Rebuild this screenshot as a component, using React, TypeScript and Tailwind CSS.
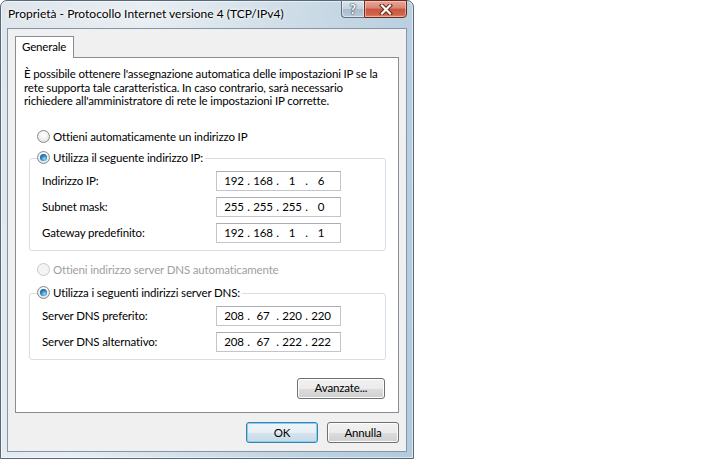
import React, { Fragment } from "react";

function Radio({ checked = false, disabled = false }: { checked?: boolean; disabled?: boolean }) {
  return (
    <span
      className={
        "w-[13px] h-[13px] rounded-full border flex items-center justify-center shrink-0 " +
        (disabled
          ? "border-[#c9c9c9] bg-[#f4f4f4]"
          : "border-[#8a8a8a] bg-[radial-gradient(circle_at_50%_35%,#ffffff_0%,#f0f0f0_50%,#d4d4d4_100%)]")
      }
    >
      {checked && (
        <span className="w-[7px] h-[7px] rounded-full bg-[radial-gradient(circle_at_62%_68%,#8fe2ff_0%,#2f86c4_45%,#0d3f6f_100%)]" />
      )}
    </span>
  );
}

function IpBox({ parts }: { parts: string[] }) {
  return (
    <div className="w-[125px] h-[20px] border border-[#c2c6cc] border-t-[#abadb3] bg-white flex items-center pl-[4px] text-black">
      {parts.map((p, i) => (
        <Fragment key={i}>
          {i > 0 && <span className="w-[3px] text-center">.</span>}
          <span className="w-[26px] text-center">{p}</span>
        </Fragment>
      ))}
    </div>
  );
}

function Row({ label, parts }: { label: string; parts: string[] }) {
  return (
    <div className="flex items-center h-[20px]">
      <span className="w-[186px] pl-[12px]">{label}</span>
      <IpBox parts={parts} />
    </div>
  );
}

function Btn({ children, def = false, w }: { children: React.ReactNode; def?: boolean; w: string }) {
  return (
    <div
      className={
        "h-[21px] rounded-[3px] border flex items-center justify-center text-[11.5px] leading-[14px] tracking-[-0.15px] text-black " +
        w +
        " " +
        (def
          ? "border-[#3c7fb1] bg-[linear-gradient(#eef5f9_0%,#e6eff5_50%,#d6e4ed_50%,#c9dae6_100%)] shadow-[inset_0_0_0_1px_#7fd3f2]"
          : "border-[#707070] bg-[linear-gradient(#f2f2f2_0%,#ebebeb_50%,#dddddd_50%,#cfcfcf_100%)] shadow-[inset_0_0_0_1px_#fcfcfc]")
      }
    >
      {children}
    </div>
  );
}

export default function App() {
  return (
    <div className="w-[720px] h-[459px] bg-white flex font-[Lato,sans-serif] text-black overflow-hidden">
      <div className="w-[414px] h-[459px] rounded-t-[7px] border border-[#55697a] bg-[linear-gradient(100deg,#dfe6eb_0%,#e8eef2_30%,#d2dfe8_55%,#bcd1e1_80%,#b3cadc_100%)] shadow-[inset_0_0_0_1px_rgba(255,255,255,0.55)] flex flex-col">
        {/* title bar */}
        <div className="h-[27px] flex items-start pl-[7px] pr-[6px] shrink-0">
          <span className="mt-[6px] text-[12px] leading-[14px] whitespace-nowrap [text-shadow:0_0_5px_#ffffff,0_0_3px_#ffffff]">
            Proprietà - Protocollo Internet versione 4 (TCP/IPv4)
          </span>
          <div className="ml-auto flex -mt-px">
            <div className="w-[23px] h-[18px] rounded-bl-[4px] border border-[#5d6f80] border-r-0 bg-[linear-gradient(#d9e3ec_0%,#c3d1dd_50%,#a9bccc_50%,#b9cad8_100%)] shadow-[inset_0_0_0_1px_rgba(255,255,255,0.5)] flex items-center justify-center">
              <span className="text-[13px] leading-[13px] font-bold text-white [text-shadow:0_0_1px_#3d4e5e,0_0_1px_#3d4e5e,0_0_2px_#3d4e5e]">?</span>
            </div>
            <div className="w-[43px] h-[18px] rounded-br-[4px] border border-[#6b2a20] bg-[linear-gradient(#e7a898_0%,#d98471_45%,#c8553f_50%,#d2644b_85%,#e08a6a_100%)] shadow-[inset_0_0_0_1px_rgba(255,220,210,0.5)] flex items-center justify-center">
              <svg width="14" height="11" viewBox="0 0 14 11">
                <path d="M3 1.5 L11 9.5 M11 1.5 L3 9.5" stroke="#5a2218" strokeWidth="4" strokeLinecap="square" />
                <path d="M3 1.5 L11 9.5 M11 1.5 L3 9.5" stroke="#ffffff" strokeWidth="2.2" strokeLinecap="square" />
              </svg>
            </div>
          </div>
        </div>
        {/* client */}
        <div className="mx-[6px] mb-[6px] flex-1 border border-[#8296a8] bg-[#f0f0f0] flex flex-col">
          <div className="flex pl-[7px] pt-[7px]">
            <div className="relative z-10 -mb-px w-[59px] h-[22px] border border-b-0 border-[#898c95] bg-white flex items-start pl-[6px] pt-[3px] text-[11.5px] leading-[14px] tracking-[-0.15px]">
              Generale
            </div>
          </div>
          <div className="mx-[7px] h-[356px] border border-[#898c95] bg-white flex flex-col text-[11.5px] leading-[14px] tracking-[-0.15px] whitespace-nowrap">
            <p className="pl-[8px] pt-[9px] leading-[13.5px]">
              È possibile ottenere l'assegnazione automatica delle impostazioni IP se la
              <br />
              rete supporta tale caratteristica. In caso contrario, sarà necessario
              <br />
              richiedere all'amministratore di rete le impostazioni IP corrette.
            </p>
            <div className="mt-[22px] ml-[21px] flex items-center gap-[3px] h-[14px]">
              <Radio />
              <span>Ottieni automaticamente un indirizzo IP</span>
            </div>
            <div className="mt-[14px] ml-[13px] mr-[12px] border border-[#d5dfe5] rounded-[3px] pb-[7px]">
              <div className="-mt-[8px] ml-[7px] flex">
                <div className="flex items-center gap-[3px] h-[14px] bg-white pr-[2px]">
                  <Radio checked />
                  <span>Utilizza il seguente indirizzo IP:</span>
                </div>
              </div>
              <div className="mt-[6px] flex flex-col gap-[6px]">
                <Row label="Indirizzo IP:" parts={["192", "168", "1", "6"]} />
                <Row label="Subnet mask:" parts={["255", "255", "255", "0"]} />
                <Row label="Gateway predefinito:" parts={["192", "168", "1", "1"]} />
              </div>
            </div>
            <div className="mt-[12px] ml-[21px] flex items-center gap-[3px] h-[14px] text-[#a0a0a0]">
              <Radio disabled />
              <span>Ottieni indirizzo server DNS automaticamente</span>
            </div>
            <div className="mt-[16px] ml-[13px] mr-[12px] border border-[#d5dfe5] rounded-[3px] pb-[7px]">
              <div className="-mt-[8px] ml-[7px] flex">
                <div className="flex items-center gap-[3px] h-[14px] bg-white pr-[2px]">
                  <Radio checked />
                  <span>Utilizza i seguenti indirizzi server DNS:</span>
                </div>
              </div>
              <div className="mt-[6px] flex flex-col gap-[6px]">
                <Row label="Server DNS preferito:" parts={["208", "67", "220", "220"]} />
                <Row label="Server DNS alternativo:" parts={["208", "67", "222", "222"]} />
              </div>
            </div>
            <div className="mt-[18px] mr-[13px] flex justify-end">
              <Btn w="w-[88px]">Avanzate...</Btn>
            </div>
          </div>
          <div className="mt-[9px] pr-[7px] flex justify-end gap-[9px]">
            <Btn def w="w-[72px]">OK</Btn>
            <Btn w="w-[72px]">Annulla</Btn>
          </div>
        </div>
      </div>
    </div>
  );
}
